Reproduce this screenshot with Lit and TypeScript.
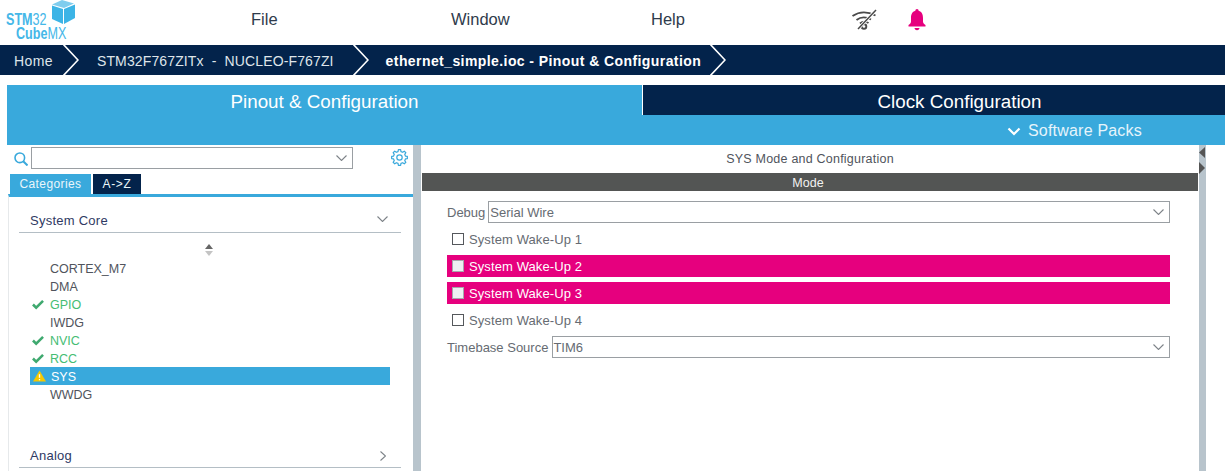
import { LitElement, html, css } from "lit";
import { customElement } from "lit/decorators.js";

const chev = () => html`<svg class="c" viewBox="0 0 16 30"><path d="M0 -1 L15 15 L0 31" fill="none" stroke="#fff" stroke-width="1.6"/></svg>`;
const down = html`<svg class="dd" viewBox="0 0 11 6"><path d="M.5.5 5.500 5.500 10.500.5" fill="none" stroke="#7d8388" stroke-width="1.100"/></svg>`;
const check = html`<svg class="ic" viewBox="0 0 14 12"><path d="M1.500 6 5 9.500 12.500 2" fill="none" stroke="#3fa96f" stroke-width="2.800"/></svg>`;
const warn = html`<svg class="warn" viewBox="0 0 14 12"><path d="M7 0 14 12H0Z" fill="#f5c800"/><path d="M7 4v4M7 9.200v1.300" stroke="#fff" stroke-width="1.400"/></svg>`;

function gearPath(): string {
  const teeth = 8, cx = 12, cy = 12, ro = 11.2, ri = 8.6;
  const pts: string[] = [];
  for (let i = 0; i < teeth; i++) {
    const a = (i / teeth) * Math.PI * 2;
    const s = Math.PI / teeth;
    const add = (r: number, t: number) => pts.push(`${(cx + r * Math.cos(t)).toFixed(2)} ${(cy + r * Math.sin(t)).toFixed(2)}`);
    add(ri, a - s * 0.62);
    add(ro, a - s * 0.36);
    add(ro, a + s * 0.36);
    add(ri, a + s * 0.62);
  }
  return "M" + pts.join("L") + "Z";
}

@customElement("app-root")
export class AppRoot extends LitElement {
  static styles = css`
    :host { display: block; width: 1225px; height: 471px; overflow: hidden; background: #fff; font-family: "Liberation Sans", Arial, sans-serif; color: #5a5f66; }
    .top { height: 45px; display: flex; align-items: center; }
    .logo { width: 251px; height: 45px; position: relative; flex: none; color: #45b7e8; }
    .logo span { position: absolute; white-space: nowrap; font-size: 17px; line-height: 13px; transform-origin: left top; transform: scaleX(.74); }
    .logo b { font-weight: 700; }
    .logo .l1 { left: 6px; top: 12.500px; }
    .logo .l2 { left: 16px; top: 26.500px; }
    .logo svg { position: absolute; left: 51px; top: 0; width: 24px; height: 24px; }
    .menu { width: 200px; font-size: 16.500px; color: #2f3b4c; flex: none; padding-bottom: 7px; }
    .wifi { width: 26px; height: 22px; flex: none; margin-bottom: 5px; }
    .bell { margin-left: 30px; width: 20px; height: 24px; flex: none; margin-bottom: 6px; }
    .crumbs { height: 30px; background: #03234b; display: flex; align-items: center; color: #dfe5ea; font-size: 14px; white-space: nowrap; }
    .crumbs span { padding-top: 1px; }
    .c { width: 16px; height: 30px; flex: none; }
    .crumbs .a { margin-left: 14px; margin-right: 10px; letter-spacing: .4px; }
    .crumbs .b { margin-left: 18px; margin-right: 19px; letter-spacing: .13px; }
    .crumbs .d { margin-left: 17px; margin-right: 9px; font-weight: 700; color: #fff; letter-spacing: .42px; }
    .tabs { margin: 10px 0 0 7px; display: flex; height: 30px; font-size: 18.800px; }
    .tabs div { display: flex; align-items: center; justify-content: center; color: #fff; padding-top: 3px; box-sizing: border-box; }
    .t1 { width: 635px; background: #39a9dc; }
    .tabs .t2 { flex: 1; margin-left: 1px; background: #03234b; padding-left: 51px; }
    .sp { margin-left: 7px; height: 30px; padding-top: 2px; box-sizing: border-box; background: #39a9dc; color: #e6f4fb; font-size: 16px; letter-spacing: .2px; display: flex; align-items: center; }
    .sp svg { width: 14px; height: 9px; margin-left: 1000px; margin-right: 7px; flex: none; }
    .main { display: flex; height: 326px; }
    .left { width: 406px; margin-left: 7px; flex: none; display: flex; flex-direction: column; }
    .search { height: 29px; display: flex; align-items: flex-start; flex: none; }
    .mag { width: 14px; height: 14px; margin: 7px 3px 0 7px; flex: none; }
    .input { width: 322px; height: 22px; margin-top: 2px; box-sizing: border-box; border: 1px solid #9a9fa3; display: flex; align-items: center; justify-content: flex-end; padding-right: 5px; flex: none; }
    .dd { width: 11px; height: 6px; flex: none; }
    .gear { width: 17px; height: 17px; margin: 4px 0 0 38px; flex: none; }
    .cats { display: flex; height: 20px; padding-left: 3px; font-size: 12px; flex: none; }
    .cats div { display: flex; align-items: center; justify-content: center; color: #eaf6fb; }
    .cats .on { width: 81px; background: #39a9dc; letter-spacing: .4px; }
    .cats .off { width: 48px; margin-left: 2px; background: #03234b; letter-spacing: .7px; }
    .panel { flex: 1; border-top: 3px solid #39a9dc; margin-left: 1px; border-left: 1px solid #e6e9eb; display: flex; flex-direction: column; padding: 0 0 0 10px; min-height: 0; }
    .group { height: 35px; width: 382px; box-sizing: border-box; margin-top: 1px; flex: none; border-bottom: 1px solid #b4bec5; display: flex; align-items: center; justify-content: space-between; padding: 11px 13px 0 11px; color: #2f3a63; font-size: 13px; letter-spacing: .25px; }
    .group .dd { margin-top: -3px; }
    .sort { width: 8px; height: 12px; margin: 11px 0 0 186px; flex: none; }
    .list { margin: 3px 0 0 11px; width: 360px; flex: none; font-size: 12.500px; }
    .it { height: 18px; box-sizing: border-box; padding-top: 1px; display: flex; align-items: center; position: relative; padding-left: 20px; color: #50545c; }
    .it.g { color: #45bd73; }
    .it.s { background: #39a9dc; color: #fff; padding-left: 21px; }
    .ic { position: absolute; left: 1px; top: 4px; width: 14px; height: 11px; }
    .warn { position: absolute; left: 3px; top: 3px; width: 13px; height: 12px; }
    .group.last { margin-top: 38px; height: 27px; padding: 3px 15px 0 11px; }
    .group .rt { width: 6px; height: 10px; flex: none; }
    .split { width: 8px; background: #b8c4cc; flex: none; }
    .right { width: 776px; flex: none; margin-left: 1px; display: flex; flex-direction: column; font-size: 13px; }
    .title { height: 28px; display: flex; align-items: center; justify-content: center; color: #50545c; font-size: 12.500px; letter-spacing: .22px; flex: none; }
    .mode { height: 18px; box-sizing: border-box; padding: 1px 4px 0 0; background: #535554; color: #f2f2f2; display: flex; align-items: center; justify-content: center; font-size: 12.500px; flex: none; }
    .form { padding: 10px 28px 0 25px; display: flex; flex-direction: column; }
    .row { display: flex; align-items: center; height: 22px; color: #666b72; }
    .row.tb { margin-top: 5px; }
    .row .lb { padding-top: 1px; }
    .sel { flex: 1; height: 22px; margin-left: 3px; box-sizing: border-box; border: 1px solid #9a9fa3; display: flex; align-items: center; justify-content: space-between; padding: 1px 5px 0 1px; }
    .row.tb .sel { margin-left: 4px; padding-left: 0; }
    .sel .dd { margin-top: -1px; }
    .chk { height: 22px; box-sizing: border-box; padding-left: 5px; margin-top: 5px; display: flex; align-items: center; color: #666b72; gap: 5px; letter-spacing: .1px; }
    .chk i { width: 12px; height: 12px; box-sizing: border-box; border: 1px solid #55585c; flex: none; }
    .chk.p { background: #e6007e; color: #fff; }
    .chk.p i { background: #eef0f2; border-color: #a7a9ac; }
    .rail { width: 7px; margin-left: 1px; background: #b8c4cc; flex: none; position: relative; }
    .rail svg { position: absolute; left: 0; top: 2px; width: 7px; height: 28px; }
  `;
  render() {
    return html`
      <div class="top">
        <div class="logo">
          <span class="l1"><b>STM</b>32</span><span class="l2"><b>Cube</b>MX</span>
          <svg viewBox="0 0 24 24"><path d="M11 0 23 3.500 13 8 1 4.500Z" fill="#7fcdee"/><path d="M1 5.500 12 9V24L1 19Z" fill="#3cb4e6"/><path d="M13 9 24 4.500V18L13 24Z" fill="#3cb4e6"/></svg>
        </div>
        <div class="menu">File</div><div class="menu">Window</div><div class="menu">Help</div>
        <svg class="wifi" viewBox="0 0 26 22"><g fill="none" stroke="#4a4a4a" stroke-width="1.900"><path d="M1.500 7Q12 0 24.500 6.500"/><path d="M5.500 11Q12 6 20 10.500"/><path d="M9 14.500Q13 11 17.500 14"/><circle cx="13" cy="17.500" r="2.300"/><path d="M25 1 7 20" stroke="#fff" stroke-width="3.200"/><path d="M25 1 7 20" stroke-width="1.500"/></g></svg>
        <svg class="bell" viewBox="0 0 20 24"><path d="M10 1c1 0 1.600.7 1.600 1.800C15 3.800 16 6.500 16 10v3.500c0 1.500 1 2.500 2.500 3.500v1.500h-17V17C3 16 4 15 4 13.500V10c0-3.500 1-6.200 4.400-7.200C8.400 1.700 9 1 10 1Z" fill="#e6007e"/><path d="M7.500 20h5c0 1-1 2.200-2.500 2.200S7.500 21 7.500 20Z" fill="#e6007e"/></svg>
      </div>
      <div class="crumbs">
        <span class="a">Home</span>${chev()}<span class="b">STM32F767ZITx&nbsp; -&nbsp; NUCLEO-F767ZI</span>${chev()}<span class="d">ethernet_simple.ioc - Pinout &amp; Configuration</span>${chev()}
      </div>
      <div class="tabs"><div class="t1">Pinout &amp; Configuration</div><div class="t2">Clock Configuration</div></div>
      <div class="sp"><svg viewBox="0 0 14 9"><path d="M1.500 1.500 7 7l5.500-5.500" fill="none" stroke="#fff" stroke-width="2.200"/></svg>Software Packs</div>
      <div class="main">
        <div class="left">
          <div class="search">
            <svg class="mag" viewBox="0 0 14 14"><circle cx="5.800" cy="5.800" r="4.800" fill="none" stroke="#39a9dc" stroke-width="1.600"/><path d="M9.200 9.200 13.500 13.500" stroke="#39a9dc" stroke-width="2"/></svg>
            <div class="input">${down}</div>
            <svg class="gear" viewBox="0 0 24 24"><path d=${gearPath()} fill="none" stroke="#39a9dc" stroke-width="1.700" stroke-linejoin="round"/><circle cx="12" cy="12" r="3.800" fill="none" stroke="#39a9dc" stroke-width="1.700"/></svg>
          </div>
          <div class="cats"><div class="on">Categories</div><div class="off">A-&gt;Z</div></div>
          <div class="panel">
            <div class="group">System Core ${down}</div>
            <svg class="sort" viewBox="0 0 8 12"><path d="M4 0 8 5H0Z" fill="#666"/><path d="M4 12 8 7H0Z" fill="#c4c4c4"/></svg>
            <div class="list">
              <div class="it">CORTEX_M7</div>
              <div class="it">DMA</div>
              <div class="it g">${check}GPIO</div>
              <div class="it">IWDG</div>
              <div class="it g">${check}NVIC</div>
              <div class="it g">${check}RCC</div>
              <div class="it s">${warn}SYS</div>
              <div class="it">WWDG</div>
            </div>
            <div class="group last">Analog <svg class="rt" viewBox="0 0 6 10"><path d="M.5.500 5.500 5 .5 9.500" fill="none" stroke="#7d8388" stroke-width="1.100"/></svg></div>
          </div>
        </div>
        <div class="split"></div>
        <div class="right">
          <div class="title">SYS Mode and Configuration</div>
          <div class="mode">Mode</div>
          <div class="form">
            <div class="row"><span class="lb">Debug</span><div class="sel">Serial Wire ${down}</div></div>
            <div class="chk"><i></i>System Wake-Up 1</div>
            <div class="chk p"><i></i>System Wake-Up 2</div>
            <div class="chk p"><i></i>System Wake-Up 3</div>
            <div class="chk"><i></i>System Wake-Up 4</div>
            <div class="row tb"><span class="lb">Timebase Source</span><div class="sel">TIM6 ${down}</div></div>
          </div>
        </div>
        <div class="rail"><svg viewBox="0 0 7 28"><path d="M6 0V11L0 5.500Z" fill="#555"/><path d="M0 15V27L6 21Z" fill="#555"/></svg></div>
      </div>
    `;
  }
}
